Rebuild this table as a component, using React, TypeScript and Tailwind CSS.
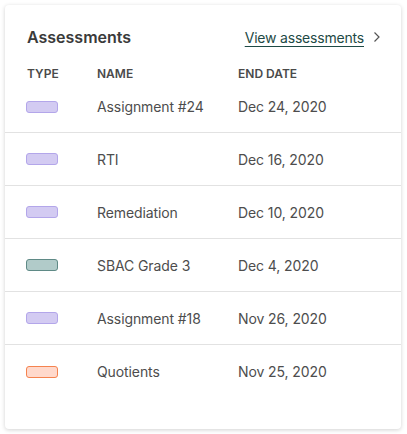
import React from "react";

const rows = [
  { name: "Assignment #24", date: "Dec 24, 2020", kind: "purple" },
  { name: "RTI", date: "Dec 16, 2020", kind: "purple" },
  { name: "Remediation", date: "Dec 10, 2020", kind: "purple" },
  { name: "SBAC Grade 3", date: "Dec 4, 2020", kind: "teal" },
  { name: "Assignment #18", date: "Nov 26, 2020", kind: "purple" },
  { name: "Quotients", date: "Nov 25, 2020", kind: "orange" },
];

function Swatch({ kind }: { kind: string }) {
  if (kind === "teal")
    return <div className="w-[32px] h-[12px] rounded-[3px] border border-[#5f8a86] bg-[#b1cbc9]" />;
  if (kind === "orange")
    return <div className="w-[32px] h-[12px] rounded-[3px] border border-[#f5834f] bg-[#ffd9cc]" />;
  return <div className="w-[32px] h-[12px] rounded-[3px] border border-[#b3a6ea] bg-[#d3cbf2]" />;
}

export default function App() {
  return (
    <div className="w-[407px] h-[434px] bg-white p-[5px] font-['Inter',sans-serif]">
      <div className="w-[396px] h-[424px] bg-white rounded-[4px] shadow-[0_1px_4px_rgba(0,0,0,0.18)] pt-[20px]">
        <div className="flex items-center justify-between pl-[22px] pr-[20px] h-[24px]">
          <div className="text-[16px] font-semibold text-[#3a3a3a]">Assessments</div>
          <div className="flex items-center gap-[9px] text-[14px] text-[#1e4a45] tracking-[-0.2px]">
            <span className="underline underline-offset-[3px] decoration-[1px]">View assessments</span>
            <svg width="8" height="12" viewBox="0 0 8 12" fill="none">
              <path d="M1.5 1.5 L6 6 L1.5 10.5" stroke="#555" strokeWidth="1.2" />
            </svg>
          </div>
        </div>
        <div className="grid grid-cols-[70px_141px_1fr] pl-[22px] mt-[16px] h-[16px] items-center text-[12px] font-semibold text-[#4a4a4a]">
          <div>TYPE</div>
          <div>NAME</div>
          <div>END DATE</div>
        </div>
        <div className="divide-y divide-[#e2e2e2]">
          {rows.map((r) => (
            <div
              key={r.name}
              className="grid grid-cols-[70px_141px_1fr] pl-[22px] h-[53px] first:h-[52px] items-center text-[14px] text-[#4d4d4d] tracking-[-0.1px]"
            >
              <div className="-ml-[1px]">
                <Swatch kind={r.kind} />
              </div>
              <div>{r.name}</div>
              <div>{r.date}</div>
            </div>
          ))}
        </div>
      </div>
    </div>
  );
}
